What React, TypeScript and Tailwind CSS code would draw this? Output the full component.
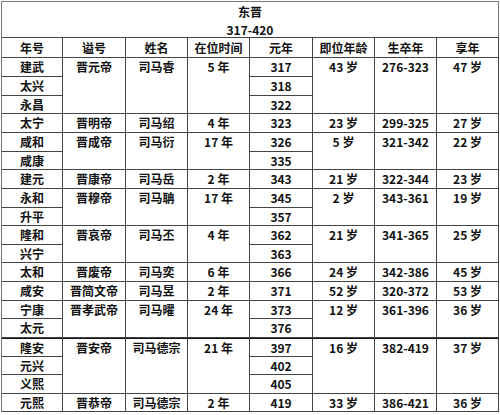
type Cell = { t: string; rs?: number };
type Row = { era: string; year: string; cells?: Cell[]; thick?: boolean };

const rows: Row[] = [
  {
    era: "建武",
    year: "317",
    cells: [
      { t: "晋元帝", rs: 3 },
      { t: "司马睿", rs: 3 },
      { t: "5 年", rs: 3 },
      { t: "43 岁", rs: 3 },
      { t: "276-323", rs: 3 },
      { t: "47 岁", rs: 3 },
    ],
  },
  { era: "太兴", year: "318" },
  { era: "永昌", year: "322" },
  {
    era: "太宁",
    year: "323",
    cells: [{ t: "晋明帝" }, { t: "司马绍" }, { t: "4 年" }, { t: "23 岁" }, { t: "299-325" }, { t: "27 岁" }],
  },
  {
    era: "咸和",
    year: "326",
    cells: [
      { t: "晋成帝", rs: 2 },
      { t: "司马衍", rs: 2 },
      { t: "17 年", rs: 2 },
      { t: "5 岁", rs: 2 },
      { t: "321-342", rs: 2 },
      { t: "22 岁", rs: 2 },
    ],
  },
  { era: "咸康", year: "335" },
  {
    era: "建元",
    year: "343",
    cells: [{ t: "晋康帝" }, { t: "司马岳" }, { t: "2 年" }, { t: "21 岁" }, { t: "322-344" }, { t: "23 岁" }],
  },
  {
    era: "永和",
    year: "345",
    cells: [
      { t: "晋穆帝", rs: 2 },
      { t: "司马聃", rs: 2 },
      { t: "17 年", rs: 2 },
      { t: "2 岁", rs: 2 },
      { t: "343-361", rs: 2 },
      { t: "19 岁", rs: 2 },
    ],
  },
  { era: "升平", year: "357" },
  {
    era: "隆和",
    year: "362",
    cells: [
      { t: "晋哀帝", rs: 2 },
      { t: "司马丕", rs: 2 },
      { t: "4 年", rs: 2 },
      { t: "21 岁", rs: 2 },
      { t: "341-365", rs: 2 },
      { t: "25 岁", rs: 2 },
    ],
  },
  { era: "兴宁", year: "363" },
  {
    era: "太和",
    year: "366",
    cells: [{ t: "晋废帝" }, { t: "司马奕" }, { t: "6 年" }, { t: "24 岁" }, { t: "342-386" }, { t: "45 岁" }],
  },
  {
    era: "咸安",
    year: "371",
    cells: [{ t: "晋简文帝" }, { t: "司马昱" }, { t: "2 年" }, { t: "52 岁" }, { t: "320-372" }, { t: "53 岁" }],
  },
  {
    era: "宁康",
    year: "373",
    cells: [
      { t: "晋孝武帝", rs: 2 },
      { t: "司马曜", rs: 2 },
      { t: "24 年", rs: 2 },
      { t: "12 岁", rs: 2 },
      { t: "361-396", rs: 2 },
      { t: "36 岁", rs: 2 },
    ],
  },
  { era: "太元", year: "376" },
  {
    era: "隆安",
    year: "397",
    thick: true,
    cells: [
      { t: "晋安帝", rs: 3 },
      { t: "司马德宗", rs: 3 },
      { t: "21 年", rs: 3 },
      { t: "16 岁", rs: 3 },
      { t: "382-419", rs: 3 },
      { t: "37 岁", rs: 3 },
    ],
  },
  { era: "元兴", year: "402" },
  { era: "义熙", year: "405" },
  {
    era: "元熙",
    year: "419",
    cells: [{ t: "晋恭帝" }, { t: "司马德宗" }, { t: "2 年" }, { t: "33 岁" }, { t: "386-421" }, { t: "36 岁" }],
  },
];

const heads = ["年号", "谥号", "姓名", "在位时间", "元年", "即位年龄", "生卒年", "享年"];

const span = (n?: number) => (n === 3 ? "row-span-3" : n === 2 ? "row-span-2" : "");

// one table cell; spanned cells keep their text on the first row
function Box({ children, rs, top, thick }: { children: string; rs?: number; top?: boolean; thick?: boolean }) {
  return (
    <div
      className={`${span(rs)} flex justify-center border-r border-b border-[#444] leading-[18px] ${
        top ? "items-start" : "items-center"
      } ${thick ? "border-t border-t-[#111]" : ""}`}
    >
      {children}
    </div>
  );
}

export default function App() {
  return (
    <div className="h-[415px] w-[500px] bg-white pl-px pt-px text-[#111]">
      <div
        className="grid w-[498px] grid-cols-[61px_63px_62px_62px_63px_62px_62px_62px] grid-rows-[36px_20px_19px_19px_18px_19px_19px_18px_19px_19px_18px_19px_18px_19px_19px_18px_19px_19px_18px_19px_18px] border-t border-l border-[#777] text-center text-[12px] font-bold"
        style={{ fontFamily: '"Noto Sans CJK SC", "Noto Sans", sans-serif' }}
      >
        <div className="col-span-8 flex flex-col items-center border-r border-b border-r-[#777] border-b-[#444] pt-px leading-[18px]">
          <span>东晋</span>
          <span>317-420</span>
        </div>
        {heads.map((h) => (
          <Box key={h}>{h}</Box>
        ))}
        {rows.map((r) => [
          <Box key={r.era} thick={r.thick}>
            {r.era}
          </Box>,
          ...(r.cells?.slice(0, 3).map((c, j) => (
            <Box key={r.era + j} rs={c.rs} top={!!c.rs} thick={r.thick}>
              {c.t}
            </Box>
          )) ?? []),
          <Box key={r.era + "y"} thick={r.thick}>
            {r.year}
          </Box>,
          ...(r.cells?.slice(3).map((c, j) => (
            <Box key={r.era + "b" + j} rs={c.rs} top={!!c.rs} thick={r.thick}>
              {c.t}
            </Box>
          )) ?? []),
        ])}
      </div>
    </div>
  );
}
